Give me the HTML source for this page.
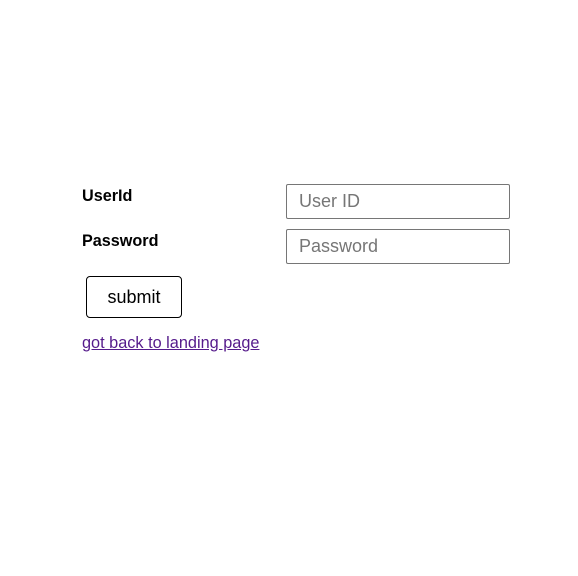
<!DOCTYPE html>
<html><head><style>
body{margin:0;background:#fff;font-family:"Liberation Sans",sans-serif;}
.a{position:absolute;}
.lbl{font-weight:bold;font-size:16.2px;color:#000;}
.inp{position:absolute;box-sizing:border-box;border:1px solid #767676;border-radius:2px;width:224px;height:35px;font-size:18px;color:#767676;padding-left:12px;line-height:33px;}
</style></head><body>
<div class="a lbl" style="left:82px;top:187px;">UserId</div>
<div class="a lbl" style="left:82px;top:232px;">Password</div>
<div class="inp" style="left:286px;top:184px;">User ID</div>
<div class="inp" style="left:286px;top:229px;">Password</div>
<div class="a" style="left:86px;top:276px;width:96px;height:42px;box-sizing:border-box;border:1px solid #000;border-radius:4px;text-align:center;line-height:40px;font-size:18px;color:#000;">submit</div>
<a class="a" style="left:82px;top:334px;font-size:16.3px;color:#551A8B;text-decoration:underline;">got back to landing page</a>
</body></html>
